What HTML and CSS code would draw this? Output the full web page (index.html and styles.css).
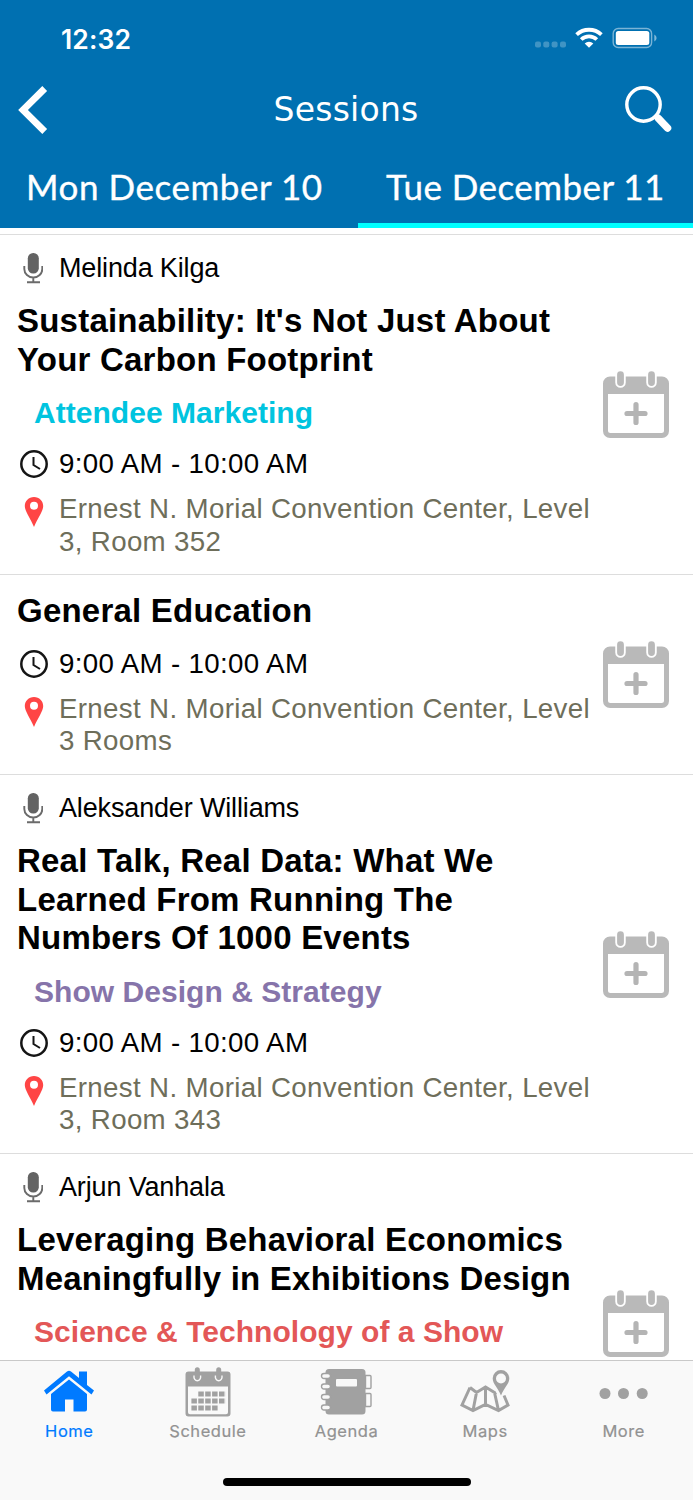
FILE: index.html
```
<!DOCTYPE html>
<html lang="en">
<head>
<meta charset="utf-8">
<title>Sessions</title>
<link rel="stylesheet" href="styles.css">
</head>
<body>
<svg class="defs" width="0" height="0" aria-hidden="true">
  <symbol id="mic" viewBox="0 0 20 32"><rect x="4.800" y="1" width="11" height="20.500" rx="5.300" fill="#636363"/><path d="M1.300 14v3a9 8.500 0 0 0 18 0v-3M10.300 25.500v4.500M4 30.200h13" fill="none" stroke="#6b6b6b" stroke-width="1.900"/></symbol>
  <symbol id="clock" viewBox="0 0 28 28"><circle cx="14" cy="14" r="12.700" fill="none" stroke="#151515" stroke-width="2.500"/><path d="M13.500 7v8l6.500 4" fill="none" stroke="#151515" stroke-width="2"/></symbol>
  <symbol id="pin" viewBox="0 0 20 32"><path fill="#ff4545" fill-rule="evenodd" d="M10 1C4.700 1 .8 5 .8 10c0 5 5.600 12.500 9.200 21 3.600-8.500 9.200-16 9.200-21 0-5-3.900-9-9.200-9zm0 4.800a4 4 0 1 1 0 8 4 4 0 0 1 0-8z"/></symbol>
  <symbol id="add" viewBox="0 0 68 68"><path fill="#b9b9b9" fill-rule="evenodd" d="M8 5.500h52a7 7 0 0 1 7 7V60a7 7 0 0 1-7 7H8a7 7 0 0 1-7-7V12.500a7 7 0 0 1 7-7zM6 23v36.500a2.500 2.500 0 0 0 2.500 2.500h51a2.500 2.500 0 0 0 2.500-2.500V23z"/><path d="M18.500 3.500v8M49.500 3.500v8" stroke="#fff" stroke-width="10.500" stroke-linecap="round"/><path d="M18.500 3.700v7.800M49.500 3.700v7.800" stroke="#b9b9b9" stroke-width="6.800" stroke-linecap="round"/><path d="M34 33.500v18M25 42.500h18" stroke="#b4b4b4" stroke-width="5.200" stroke-linecap="round"/></symbol>
</svg>
<div class="screen">
  <header class="header">
    <div class="status">
      <span class="clock-text">12:32</span>
      <svg class="status-icons" width="124" height="24" viewBox="0 0 124 24">
        <g fill="#fff" opacity=".25"><rect x="1" y="14.500" width="6" height="6" rx="2"/><rect x="9.300" y="14.500" width="6" height="6" rx="2"/><rect x="17.600" y="14.500" width="6" height="6" rx="2"/><rect x="26" y="14.500" width="6" height="6" rx="2"/></g>
        <g fill="none" stroke="#fff" stroke-width="3.800"><path d="M42.600 7.700a18 18 0 0 1 24.800 0"/><path d="M47.200 12.500a11.300 11.300 0 0 1 15.600 0"/></g><path fill="#fff" d="M50.700 16.500a6.300 6.300 0 0 1 8.600 0L55 20.800z"/>
        <rect x="79.200" y="1.500" width="38.400" height="19" rx="5" fill="none" stroke="#fff" stroke-opacity=".48" stroke-width="1.400"/><rect x="81.800" y="4" width="33.500" height="14" rx="2.500" fill="#fff"/><path d="M120.300 7.500v7q2.300-1.200 2.300-3.500t-2.300-3.500z" fill="#fff" opacity=".5"/>
      </svg>
    </div>
    <div class="navbar">
      <svg width="30" height="50" viewBox="0 0 30 50"><path d="M26.700 3.500L5 25l21.700 21.500" fill="none" stroke="#fff" stroke-width="6.800"/></svg>
      <h1 class="page-title">Sessions</h1>
      <svg width="50" height="50" viewBox="0 0 50 50"><circle cx="19.500" cy="19.500" r="16.700" fill="none" stroke="#fff" stroke-width="3.400"/><path d="M31.500 30.500l4 4" stroke="#fff" stroke-width="3.500"/><path d="M34.500 33.500l9 9.500" stroke="#fff" stroke-width="7.500" stroke-linecap="round"/></svg>
    </div>
    <nav class="days">
      <div class="day day-first"><span class="mon">Mon December 10</span></div>
      <div class="day day-active"><span class="tue">Tue December 11</span></div>
    </nav>
  </header>
  <main class="list">
    <article class="item">
      <div class="info">
        <div class="row speaker"><svg class="ico mic"><use href="#mic"/></svg><span>Melinda Kilga</span></div>
        <h2 class="title">Sustainability: It's Not Just About<br>Your Carbon Footprint</h2>
        <div class="track cyan">Attendee Marketing</div>
        <div class="row time"><svg class="ico clock"><use href="#clock"/></svg><span>9:00 AM - 10:00 AM</span></div>
        <div class="row place"><svg class="ico pin"><use href="#pin"/></svg><span>Ernest N. Morial Convention Center, Level<br>3, Room 352</span></div>
      </div>
      <svg class="add"><use href="#add"/></svg>
    </article>
    <article class="item item-short">
      <div class="info">
        <h2 class="title">General Education</h2>
        <div class="row time"><svg class="ico clock"><use href="#clock"/></svg><span>9:00 AM - 10:00 AM</span></div>
        <div class="row place"><svg class="ico pin"><use href="#pin"/></svg><span>Ernest N. Morial Convention Center, Level<br>3 Rooms</span></div>
      </div>
      <svg class="add"><use href="#add"/></svg>
    </article>
    <article class="item item-tall">
      <div class="info">
        <div class="row speaker"><svg class="ico mic"><use href="#mic"/></svg><span>Aleksander Williams</span></div>
        <h2 class="title">Real Talk, Real Data: What We<br>Learned From Running The<br>Numbers Of 1000 Events</h2>
        <div class="track purple">Show Design &amp; Strategy</div>
        <div class="row time"><svg class="ico clock"><use href="#clock"/></svg><span>9:00 AM - 10:00 AM</span></div>
        <div class="row place"><svg class="ico pin"><use href="#pin"/></svg><span>Ernest N. Morial Convention Center, Level<br>3, Room 343</span></div>
      </div>
      <svg class="add"><use href="#add"/></svg>
    </article>
    <article class="item item-cut">
      <div class="info">
        <div class="row speaker"><svg class="ico mic"><use href="#mic"/></svg><span>Arjun Vanhala</span></div>
        <h2 class="title">Leveraging Behavioral Economics<br>Meaningfully in Exhibitions Design</h2>
        <div class="track red">Science &amp; Technology of a Show</div>
      </div>
      <svg class="add"><use href="#add"/></svg>
    </article>
  </main>
  <footer class="footer">
    <nav class="tabs">
      <a class="tab active"><svg width="50" height="50" viewBox="0 0 50 50"><g fill="#007aff"><path d="M0 23.500L23 4.500q2-1.500 4 0l8 6.500V4.500h8V18l7 5.500-2.500 4L25 9.200 2.500 27.500z"/><path d="M7 27L25 12.500 43 27v15.500q0 2-2 2H29.500V32.500h-8.500v12H9q-2 0-2-2z"/></g></svg><span>Home</span></a>
      <a class="tab"><svg width="50" height="50" viewBox="0 0 50 50"><path fill="#a1a1a1" fill-rule="evenodd" d="M5.500 4.500h39q3 0 3 3v39q0 3-3 3h-39q-3 0-3-3v-39q0-3 3-3zM5 19.500v25.700q0 2 2 2h36q2 0 2-2V19.500z"/><path d="M14.300 2.700v8M35.700 2.700v8" stroke="#a1a1a1" stroke-width="5" stroke-linecap="round"/><path d="M11 8.500c-1 7 7.600 7 6.600 0M32.400 8.500c-1 7 7.600 7 6.600 0" fill="none" stroke="#f8f8f8" stroke-width="1.400"/><path d="M15.300 27H43" stroke="#a1a1a1" stroke-width="5.200" stroke-dasharray="5.500 1.400"/><path d="M8.400 34H43" stroke="#a1a1a1" stroke-width="5.200" stroke-dasharray="5.500 1.400"/><path d="M8.400 41H35" stroke="#a1a1a1" stroke-width="5.200" stroke-dasharray="5.500 1.400"/></svg><span>Schedule</span></a>
      <a class="tab"><svg width="52" height="50" viewBox="0 0 52 50"><rect x="5.500" y="2" width="40" height="45.500" rx="3.500" fill="#a1a1a1"/><rect x="16" y="12" width="21" height="7.500" rx="1" fill="#f8f8f8"/><g fill="#f8f8f8" stroke="#a1a1a1" stroke-width="1.400"><path d="M45.500 8.500H50q1 0 1 1v11q0 1-1 1h-4.500z"/><path d="M45.500 26.500H50q1 0 1 1v11q0 1-1 1h-4.500z"/><rect x="1.500" y="6.500" width="9" height="5" rx="2.500"/><rect x="1.500" y="17" width="9" height="5" rx="2.500"/><rect x="1.500" y="27.500" width="9" height="5" rx="2.500"/><rect x="1.500" y="38" width="9" height="5" rx="2.500"/></g></svg><span>Agenda</span></a>
      <a class="tab"><svg width="50" height="50" viewBox="0 0 50 50"><path d="M10 20.500L2 38l11 5.500 12.500-6 13 6L48 38l-4-9.500M10 20.500l6.500 5L25.500 20l9 5.500h3M16.500 25.500l-3.500 18M25.500 20v17.500M34.500 25.500l4 18" fill="none" stroke="#a1a1a1" stroke-width="3"/><path fill="#f8f8f8" d="M33 20l7.500 13L47 20z"/><path fill="#a1a1a1" fill-rule="evenodd" d="M41 3a8.300 8.300 0 0 0-8.300 8.300C32.700 17 37.500 20 41 28.500 44.500 20 49.300 17 49.300 11.300A8.300 8.300 0 0 0 41 3zm0 3.500a5 5 0 1 1 0 10 5 5 0 0 1 0-10z"/></svg><span>Maps</span></a>
      <a class="tab"><svg width="50" height="50" viewBox="0 0 50 50"><g fill="#a1a1a1"><circle cx="6" cy="26.500" r="5.500"/><circle cx="24.500" cy="26.500" r="5.500"/><circle cx="43.200" cy="26.500" r="5.500"/></g></svg><span>More</span></a>
    </nav>
    <div class="home-bar"></div>
  </footer>
</div>
</body>
</html>
```
FILE: styles.css
```
* { box-sizing: border-box; }
body { margin: 0; background: #fff; font-family: "Liberation Sans", Arial, sans-serif; color: #000; }
.defs { display: block; }
.screen { width: 693px; height: 1500px; display: flex; flex-direction: column; overflow: hidden; }
svg { display: block; flex: none; }
.header { height: 228px; flex: none; background: #0070b1; color: #fff; display: flex; flex-direction: column; }
.status { height: 76px; padding: 2px 35px 0 61px; display: flex; align-items: center; justify-content: space-between; }
.clock-text { font: 600 26.500px/32px Inter, sans-serif; letter-spacing: .1px; }
.navbar { height: 68px; padding: 0 19px 0 18px; display: flex; align-items: center; justify-content: space-between; }
.status + .navbar { margin-top: 0; }
.page-title { margin: 0 0 0 20px; font: 400 33px/40px "DejaVu Sans", sans-serif; letter-spacing: .25px; }
.days { height: 84px; display: flex; font: 400 35px/84px Lato, sans-serif; white-space: nowrap; -webkit-text-stroke: .35px #fff; }
.day-first { width: 358px; padding-left: 26px; }
.day-active { width: 335px; padding-left: 28px; border-bottom: 5px solid #00ffff; }
.mon { letter-spacing: .55px; }
.tue { letter-spacing: .45px; }
.list { height: 1132px; flex: none; padding-top: 6px; overflow: hidden; }
.item { border-top: 1px solid #ddd; padding: 17px 24px 16px 17px; display: flex; align-items: center; justify-content: space-between; }
.item-short { height: 200px; }
.item-tall { height: 379px; }
.item-cut { height: 340px; }
.item-cut .info { align-self: flex-start; }
.info { display: flex; flex-direction: column; white-space: nowrap; }
.row { display: grid; grid-template-columns: 42px auto; font-size: 27.700px; line-height: 32px; letter-spacing: .34px; }
.speaker { font-size: 27px; letter-spacing: -.15px; margin-bottom: 17px; }
.title { margin: 0 0 16px; padding-top: 1px; font-size: 33px; line-height: 38.500px; font-weight: 700; letter-spacing: .22px; }
.item-short .title { padding-top: 0; margin-bottom: 17px; }
.track { margin: 0 0 17px 17px; font-size: 30px; line-height: 36px; font-weight: 700; letter-spacing: .04px; }
.time { margin-bottom: 13px; }
.place { line-height: 32.500px; color: #6e6e5a; }
.cyan { color: #00c4df; }
.purple { color: #8674aa; }
.red { color: #e35757; }
.ico.mic { width: 20px; height: 32px; margin-left: 6px; }
.clock { width: 28px; height: 28px; margin: 2px 0 0 3px; }
.pin { width: 20px; height: 32px; margin: 3px 0 0 7px; }
.add { width: 68px; height: 68px; margin-right: -1px; }
.footer { height: 140px; flex: none; background: #f9f9f9; border-top: 1px solid #c9c9c9; display: flex; flex-direction: column; align-items: center; justify-content: space-between; padding-bottom: 14px; }
.tabs { width: 693px; display: grid; grid-template-columns: repeat(5, 1fr); padding-top: 6px; }
.tab { display: flex; flex-direction: column; align-items: center; gap: 4px; font: 400 16.500px/20px Inter, sans-serif; letter-spacing: .55px; color: #929292; -webkit-text-stroke: .2px currentColor; }
.active { color: #007aff; }
.home-bar { width: 248px; height: 8px; border-radius: 4px; background: #000; }
```
